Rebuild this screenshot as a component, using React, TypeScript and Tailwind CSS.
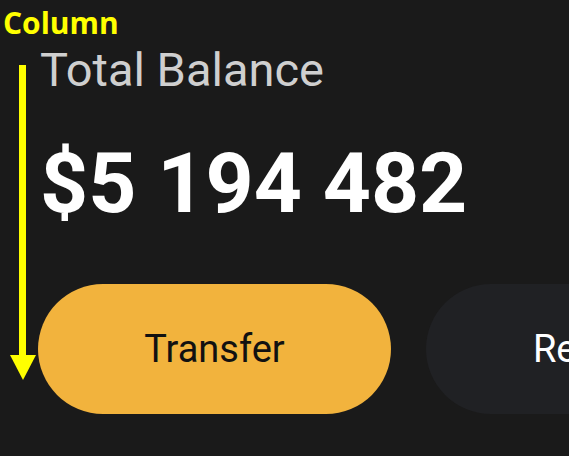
import React from "react";

export default function App() {
  return (
    <div
      className="relative w-[569px] h-[456px] overflow-hidden bg-[#1a1a1a]"
      style={{ fontFamily: "Roboto, 'Noto Sans', sans-serif" }}
    >
      <div className="flex flex-col pl-[40px] pt-[46px]">
        <div className="text-[47px] leading-none text-[#cfcfcf]">Total Balance</div>
        <div className="mt-[49px] text-[84px] leading-none font-bold text-white">$5 194 482</div>
        <div className="mt-[58px] flex gap-[35px] -ml-[2px]">
          <button className="shrink-0 w-[353px] h-[130px] rounded-full bg-[#f2b33d] text-[38px] text-[#111111] flex items-center justify-center">
            Transfer
          </button>
          <button className="shrink-0 w-[345px] h-[130px] rounded-full bg-[#202124] text-[38px] text-white flex items-center justify-center">
            Receive
          </button>
        </div>
      </div>

      {/* annotation overlay */}
      <div
        className="absolute left-[3px] top-[8px] text-[30px] font-bold leading-none text-[#ffff00]"
        style={{ fontFamily: "'Open Sans', sans-serif" }}
      >
        Column
      </div>
      <div className="absolute left-[19px] top-[65px] w-[7px] h-[292px] bg-[#ffff00]" />
      <svg className="absolute left-[10px] top-[355px]" width="26" height="25" viewBox="0 0 26 25">
        <polygon points="0,0 26,0 13,25" fill="#ffff00" />
      </svg>
    </div>
  );
}
